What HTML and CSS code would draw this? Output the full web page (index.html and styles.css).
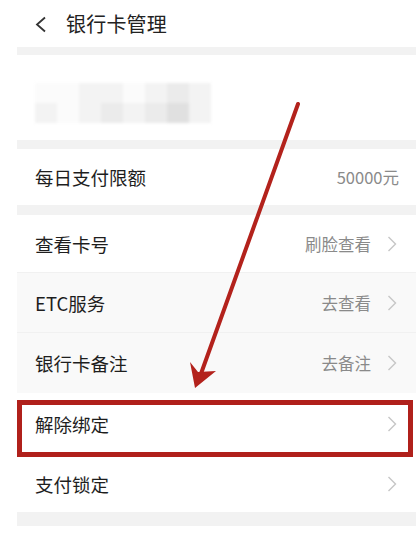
FILE: index.html
```html
<!DOCTYPE html>
<html lang="zh">
<head>
  <meta charset="UTF-8" />
  <meta name="viewport" content="width=device-width, initial-scale=1" />
  <title>银行卡管理</title>
  <link rel="stylesheet" href="styles.css">
</head>
<body>
  <div class="page">
    <div class="header">
      <svg class="back" width="13" height="17" viewBox="0 0 13 17"><path d="M11 1.5 L3 8.5 L11 15.5" fill="none" stroke="#333" stroke-width="1.8"/></svg>
      <span class="title">银行卡管理</span>
    </div>

    <div class="panel">
      <div class="band"></div>
      <div class="card-info">
        <div class="mosaic">
          <div class="mrow">
            <i class="b0"></i><i class="b0"></i><i class="b1"></i><i class="b1"></i><i class="b0"></i><i class="b1"></i><i class="b2"></i><i class="b1"></i>
          </div>
          <div class="mrow">
            <i class="b1"></i><i class="b0"></i><i class="b1"></i><i class="b2"></i><i class="b1"></i><i class="b2"></i><i class="b3"></i><i class="b1"></i>
          </div>
        </div>
      </div>
      <div class="band b9"></div>

      <div class="row r56">
        <span class="label">每日支付限额</span>
        <span class="value plain">50000元</span>
      </div>
      <div class="band b10"></div>

      <div class="row r57">
        <span class="label">查看卡号</span>
        <span class="value">刷脸查看</span>
        <svg class="chev" width="10" height="16" viewBox="0 0 10 16"><path d="M1.5 1 L8.5 8 L1.5 15" fill="none" stroke="#c6c6c6" stroke-width="1.4"/></svg>
      </div>
      <div class="row tint r60">
        <span class="label">ETC服务</span>
        <span class="value">去查看</span>
        <svg class="chev" width="10" height="16" viewBox="0 0 10 16"><path d="M1.5 1 L8.5 8 L1.5 15" fill="none" stroke="#c6c6c6" stroke-width="1.4"/></svg>
      </div>
      <div class="row tint r61">
        <span class="label">银行卡备注</span>
        <span class="value">去备注</span>
        <svg class="chev" width="10" height="16" viewBox="0 0 10 16"><path d="M1.5 1 L8.5 8 L1.5 15" fill="none" stroke="#c6c6c6" stroke-width="1.4"/></svg>
      </div>
      <div class="row r62">
        <span class="label">解除绑定</span>
        <span class="value"></span>
        <svg class="chev" width="10" height="16" viewBox="0 0 10 16"><path d="M1.5 1 L8.5 8 L1.5 15" fill="none" stroke="#c6c6c6" stroke-width="1.4"/></svg>
      </div>
      <div class="row r57">
        <span class="label">支付锁定</span>
        <span class="value"></span>
        <svg class="chev" width="10" height="16" viewBox="0 0 10 16"><path d="M1.5 1 L8.5 8 L1.5 15" fill="none" stroke="#c6c6c6" stroke-width="1.4"/></svg>
      </div>
      <div class="band b14"></div>
    </div>

    <!-- annotation drawn over the screenshot -->
    <svg class="annot" width="420" height="541" viewBox="0 0 420 541">
      <rect x="19.5" y="402.5" width="391" height="52" fill="none" stroke="#b0201b" stroke-width="5"/>
      <line x1="298" y1="104" x2="198" y2="382" stroke="#b3221c" stroke-width="4" stroke-linecap="round"/>
      <path d="M195 388 L190 362 L198 372 L216 371 Z" fill="#b3221c"/>
    </svg>
  </div>
</body>
</html>
```

FILE: styles.css
```css
body { margin: 0; background: #fff; font-family: "Noto Sans CJK SC", "Noto Sans", sans-serif; }
.page { position: relative; width: 420px; height: 541px; overflow: hidden; }
.header { height: 47px; display: flex; align-items: center; padding-left: 34px; }
.back { margin-right: 19px; margin-top: 1px; }
.title { font-size: 20px; color: #222; letter-spacing: 0.2px; }

.panel { margin-left: 17px; width: 399px; }
.band { height: 8px; background: #f2f2f2; }
.band.b9 { height: 9px; }
.band.b10 { height: 10px; }
.band.b14 { height: 14px; }

.card-info { height: 85px; display: flex; align-items: center; padding-left: 18px; }
.mosaic { display: flex; flex-direction: column; margin-top: 10px; filter: blur(1.5px); }
.mrow { display: flex; }
.mrow i { display: block; width: 22px; height: 20px; }
.b0 { background: #fbfbfb; }
.b1 { background: #f3f3f3; }
.b2 { background: #ebebeb; }
.b3 { background: #e0e0e0; }

.row { display: flex; align-items: center; padding: 0 19px 0 18px; background: #fff; box-sizing: border-box; }
.row.r56 { height: 56px; }
.row.r57 { height: 57px; }
.row.r60 { height: 60px; }
.row.r61 { height: 61px; }
.row.r62 { height: 62px; }
.row.tint { background: #f9f9f9; border-top: 1px solid #f1f1f1; }
.label { font-size: 18.5px; color: #1e1e1e; flex: 1; }
.value { font-size: 16.5px; color: #8a8a8a; }
.value.plain { margin-right: -2px; }
.chev { margin-left: 16px; }

.annot { position: absolute; left: 0; top: 0; pointer-events: none; }
```
